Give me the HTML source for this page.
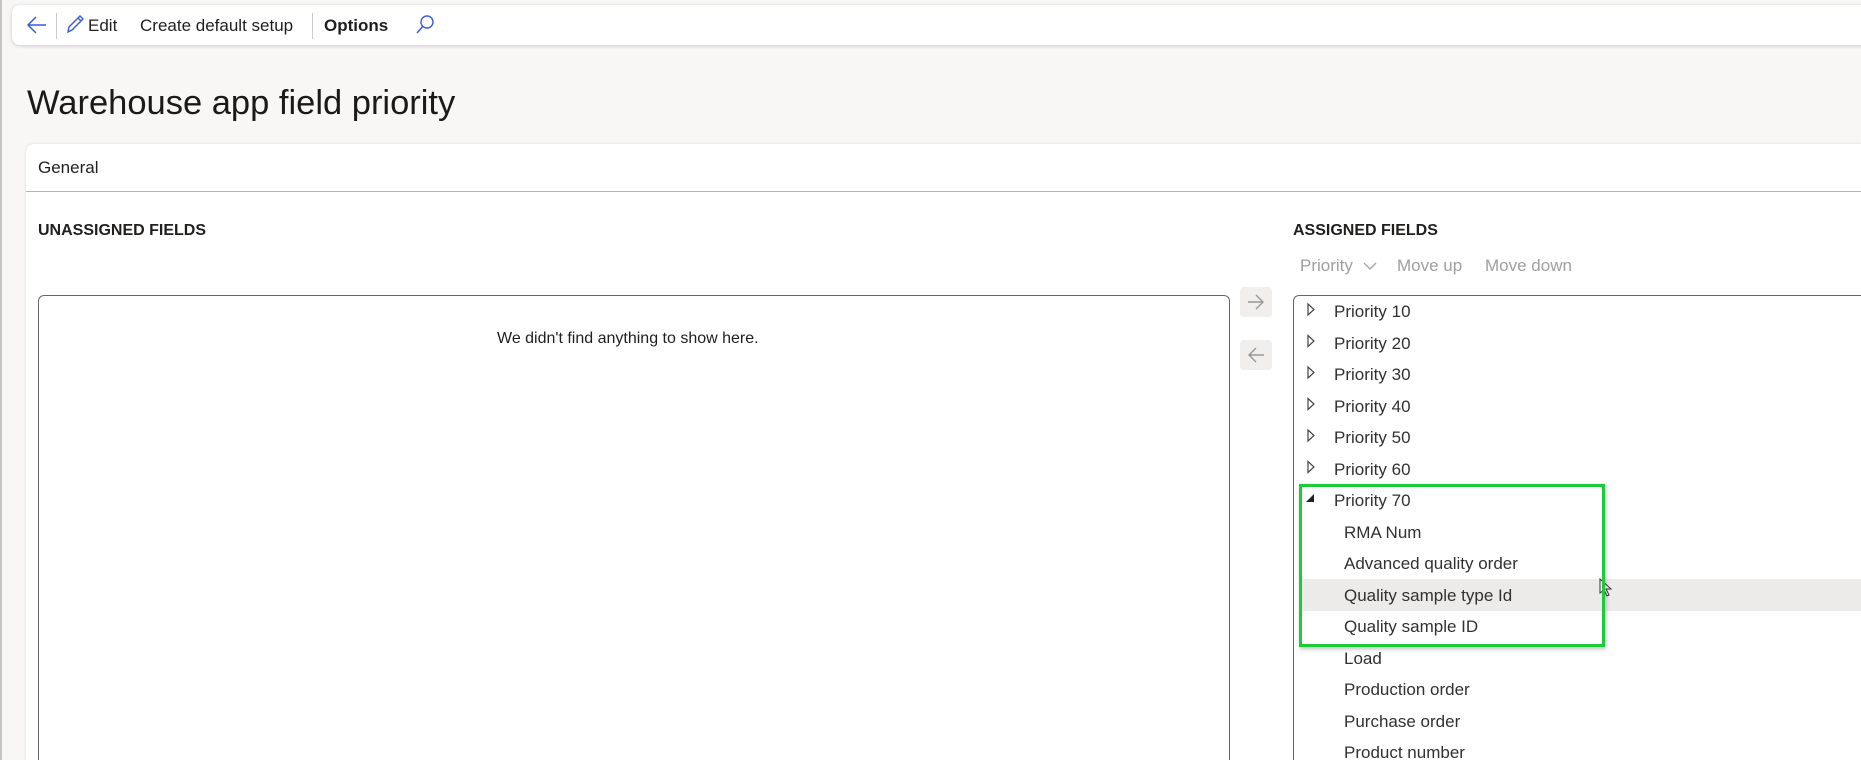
<!DOCTYPE html>
<html><head><meta charset="utf-8"><style>
*{box-sizing:border-box;margin:0;padding:0}
html,body{width:1861px;height:760px;overflow:hidden}
body{background:#f8f7f6;font-family:"Liberation Sans",sans-serif;color:#201f1e;position:relative}
.abs{position:absolute;white-space:nowrap}
.tb{position:absolute;left:12px;top:5px;width:1860px;height:40px;background:#fff;border-radius:8px;box-shadow:0 1px 4px rgba(0,0,0,.18)}
.card{position:absolute;left:26px;top:144px;width:1835px;height:616px;background:#fff;border-radius:8px 0 0 0;box-shadow:0 0 3px rgba(0,0,0,.12)}
.box{position:absolute;border:1px solid #666;border-bottom:none;border-radius:6px 6px 0 0;background:#fff}
.row{position:absolute;font-size:17px;color:#323130;white-space:nowrap}
</style></head><body>
<div style="position:absolute;left:0;top:0;width:2px;height:760px;background:#c8c6c4"></div>
<div class="tb">
<svg class="abs" style="left:14px;top:10px" width="22" height="20" viewBox="0 0 22 20"><path d="M20 10H3M10 2L2 10l8 8" fill="none" stroke="#3b5bdb" stroke-width="1.5"/></svg>
<div class="abs" style="left:44px;top:8px;width:1px;height:26px;background:#ccc"></div>
<svg class="abs" style="left:52px;top:7px" width="22" height="24" viewBox="0 0 22 24"><path d="M4 20l1-5L16 4l3 3L8 18zM14 6l3 3M4 20l4-2" fill="none" stroke="#3b5bdb" stroke-width="1.4"/></svg>
<div class="abs" style="left:76px;top:11px;font-size:17px">Edit</div>
<div class="abs" style="left:128px;top:11px;font-size:17px">Create default setup</div>
<div class="abs" style="left:300px;top:8px;width:1px;height:26px;background:#ccc"></div>
<div class="abs" style="left:312px;top:11px;font-size:17px;font-weight:bold">Options</div>
<svg class="abs" style="left:402px;top:8px" width="22" height="24" viewBox="0 0 22 24"><circle cx="13" cy="9" r="6" fill="none" stroke="#3b5bdb" stroke-width="1.4"/><path d="M9 13L3 20" stroke="#3b5bdb" stroke-width="1.5"/></svg>
</div>
<div class="abs" style="left:27px;top:84px;font-size:34.5px;color:#1b1a19">Warehouse app field priority</div>
<div class="card">
<div class="abs" style="left:12px;top:14px;font-size:17px">General</div>
<div style="position:absolute;left:0;top:47px;width:100%;height:1px;background:#b5b3b1"></div>
</div>
<div class="abs" style="left:38px;top:222px;font-size:16px;font-weight:bold">UNASSIGNED FIELDS</div>
<div class="box" style="left:38px;top:295px;width:1192px;height:465px"></div>
<div class="abs" style="left:497px;top:330px;font-size:16px">We didn't find anything to show here.</div>
<div class="abs" style="left:1240px;top:287px;width:32px;height:30px;background:#f0efee;border-radius:4px"></div>
<svg class="abs" style="left:1246px;top:293px" width="20" height="18" viewBox="0 0 20 18"><path d="M2 9h15M10 2l7 7-7 7" fill="none" stroke="#9a9896" stroke-width="1.4"/></svg>
<div class="abs" style="left:1240px;top:340px;width:32px;height:30px;background:#f0efee;border-radius:4px"></div>
<svg class="abs" style="left:1246px;top:346px" width="20" height="18" viewBox="0 0 20 18"><path d="M18 9H3M10 2L3 9l7 7" fill="none" stroke="#9a9896" stroke-width="1.4"/></svg>
<div class="abs" style="left:1293px;top:222px;font-size:16px;font-weight:bold">ASSIGNED FIELDS</div>
<div class="abs" style="left:1300px;top:256px;font-size:17px;color:#a19f9d">Priority</div>
<svg class="abs" style="left:1362px;top:260px" width="16" height="12" viewBox="0 0 16 12"><path d="M2 3l6 6 6-6" fill="none" stroke="#a19f9d" stroke-width="1.3"/></svg>
<div class="abs" style="left:1397px;top:256px;font-size:17px;color:#a19f9d">Move up</div>
<div class="abs" style="left:1485px;top:256px;font-size:17px;color:#a19f9d">Move down</div>
<div class="box" style="left:1293px;top:295px;width:568px;height:465px;border-right:none;border-radius:6px 0 0 0"></div>
<div style="position:absolute;left:1302px;top:579px;width:559px;height:32px;background:#edebe9"></div>
<div class="row" style="left:1334px;top:302px">Priority 10</div>
<div class="row" style="left:1334px;top:334px">Priority 20</div>
<div class="row" style="left:1334px;top:365px">Priority 30</div>
<div class="row" style="left:1334px;top:397px">Priority 40</div>
<div class="row" style="left:1334px;top:428px">Priority 50</div>
<div class="row" style="left:1334px;top:460px">Priority 60</div>
<div class="row" style="left:1334px;top:491px">Priority 70</div>
<div class="row" style="left:1344px;top:523px">RMA Num</div>
<div class="row" style="left:1344px;top:554px">Advanced quality order</div>
<div class="row" style="left:1344px;top:586px">Quality sample type Id</div>
<div class="row" style="left:1344px;top:617px">Quality sample ID</div>
<div class="row" style="left:1344px;top:649px">Load</div>
<div class="row" style="left:1344px;top:680px">Production order</div>
<div class="row" style="left:1344px;top:712px">Purchase order</div>
<div class="row" style="left:1344px;top:743px">Product number</div>
<svg class="abs" style="left:1305px;top:302px" width="12" height="200" viewBox="0 0 12 200">
<g fill="none" stroke="#444" stroke-width="1.2"><path d="M3 2v11l6-5.5z"/><path d="M3 33.5v11l6-5.5z"/><path d="M3 65v11l6-5.5z"/><path d="M3 96.5v11l6-5.5z"/><path d="M3 128v11l6-5.5z"/><path d="M3 159.5v11l6-5.5z"/></g>
<path d="M9 192v8H1z" fill="#222"/></svg>
<svg class="abs" style="left:1599px;top:578px" width="14" height="20" viewBox="0 0 14 20"><path d="M1 1v14l4-3 3 6 2-1-3-6h5z" fill="#fff" stroke="#333" stroke-width="1"/></svg>
<div style="position:absolute;left:1299px;top:484px;width:306px;height:163px;border:3px solid #1ec93a;box-shadow:1px 2px 4px rgba(0,0,0,.25)"></div>
</body></html>
